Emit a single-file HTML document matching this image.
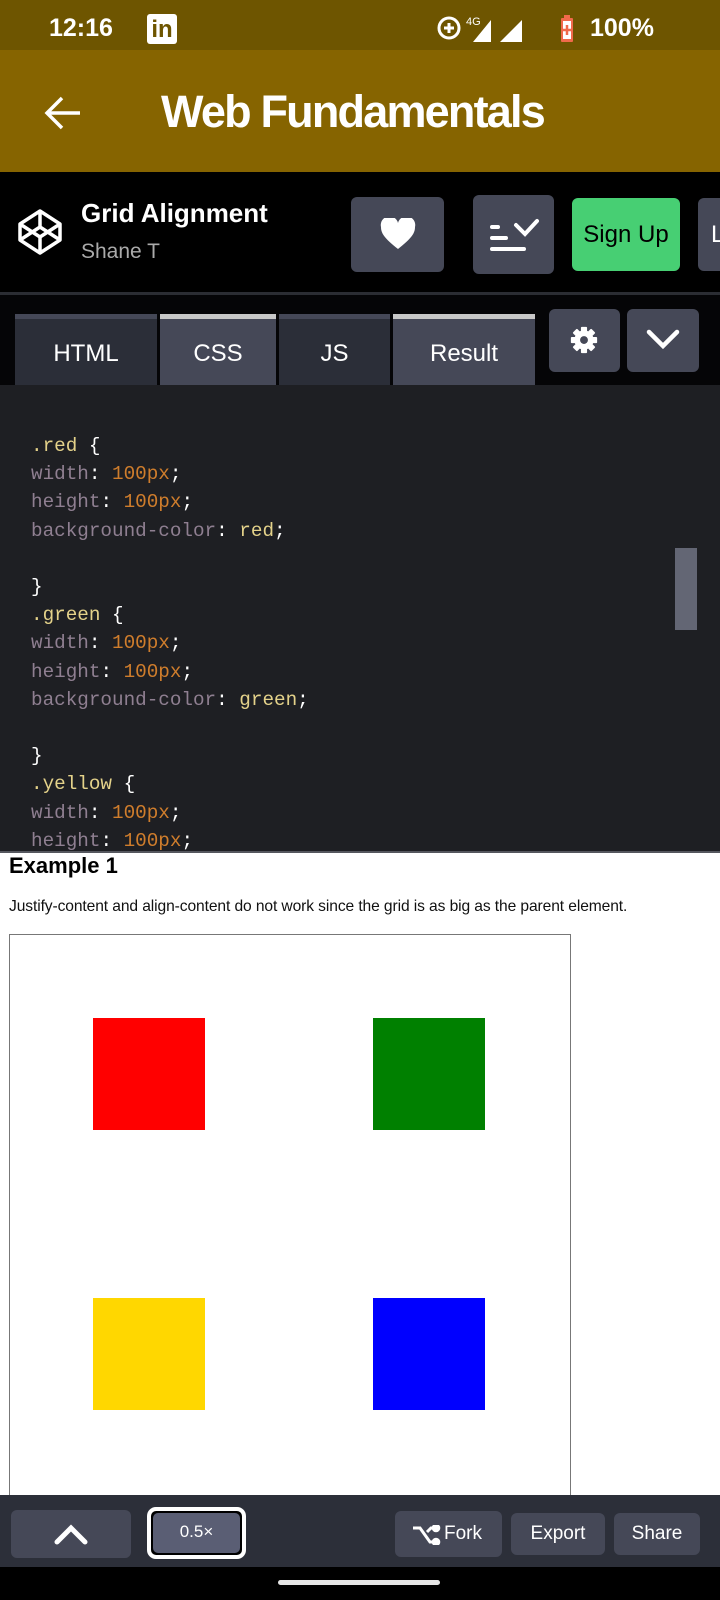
<!DOCTYPE html>
<html><head><meta charset="utf-8"><style>
*{margin:0;padding:0;box-sizing:border-box}
body{width:720px;height:1600px;overflow:hidden;background:#000;font-family:"Liberation Sans",sans-serif;position:relative}
.a{position:absolute}
.btn{position:absolute;background:#454857;border-radius:6px}
.code{font-family:"Liberation Mono",monospace;font-size:19.3px;line-height:28.2px;color:#fff;white-space:pre}
.p{color:#8f7f91}.n{color:#cf7d2c}.s{color:#e4d28a}
.tab{position:absolute;top:314px;height:71px;color:#fff;font-size:24px;text-align:center;line-height:70px}
</style></head><body>
<div class="a" style="left:0;top:0;width:720px;height:50px;background:#6e5500"></div>
<div class="a" style="left:49px;top:14px;color:#fff;font-size:25px;font-weight:bold">12:16</div>
<div class="a" style="left:147px;top:14px;width:30px;height:30px;background:#fff;border-radius:3px;color:#6e5500;font-weight:bold;font-size:24px;line-height:32px;text-align:center">in</div>
<svg class="a" style="left:435px;top:12px" width="200" height="32" viewBox="0 0 200 32">
<circle cx="14" cy="16" r="10" fill="none" stroke="#fff" stroke-width="3"/><path d="M9 16h10M14 11v10" stroke="#fff" stroke-width="3"/>
<text x="31" y="13" fill="#fff" font-size="11" font-family="Liberation Sans">4G</text>
<path d="M38 30L56 8V30Z" fill="#fff"/>
<path d="M65 30L87 8V30Z" fill="#fff"/>
<rect x="126" y="6" width="12" height="24" fill="#f06a4b" rx="1"/><rect x="129" y="3" width="6" height="4" fill="#f06a4b"/><rect x="128" y="9" width="8" height="18" fill="#fff"/><path d="M132 13v10M127 18h10" stroke="#f06a4b" stroke-width="2.5"/>
</svg>
<div class="a" style="left:590px;top:14px;color:#fff;font-size:25px;font-weight:bold">100%</div>
<div class="a" style="left:0;top:50px;width:720px;height:122px;background:#866400"></div>
<svg class="a" style="left:42px;top:92px" width="42" height="42" viewBox="0 0 42 42"><path d="M38 21H6M20 6L5 21l15 15" fill="none" stroke="#fff" stroke-width="3.5"/></svg>
<div class="a" style="left:161px;top:86px;color:#fff;font-size:45px;font-weight:bold;letter-spacing:-1.8px">Web Fundamentals</div>
<svg class="a" style="left:16px;top:208px" width="48" height="48" viewBox="0 0 48 48" fill="none" stroke="#fff" stroke-width="3.5" stroke-linejoin="round"><path d="M24 3L44 16V32L24 45L4 32V16Z M4 16L24 29L44 16 M4 32L24 19L44 32 M24 3V19 M24 29V45"/></svg>
<div class="a" style="left:81px;top:198px;color:#fff;font-size:26px;font-weight:bold">Grid Alignment</div>
<div class="a" style="left:81px;top:240px;color:#aaa;font-size:21px">Shane T</div>
<div class="btn" style="left:351px;top:197px;width:93px;height:75px"></div>
<svg class="a" style="left:380px;top:218px" width="36" height="32" viewBox="0 0 36 32"><path d="M18 31C4 20 1 15 1 9A8 8 0 0 1 18 5A8 8 0 0 1 35 9C35 15 32 20 18 31Z" fill="#fff"/></svg>
<div class="btn" style="left:473px;top:195px;width:81px;height:79px"></div>
<svg class="a" style="left:488px;top:215px" width="56" height="40" viewBox="0 0 56 40" stroke="#fff" stroke-width="4" fill="none" stroke-linecap="round"><path d="M4 12h6M4 23h14M4 34h32M28 10l9 9 12-13"/></svg>
<div class="a" style="left:572px;top:198px;width:108px;height:73px;background:#47cf73;border-radius:6px;color:#000;font-size:24px;text-align:center;line-height:73px">Sign Up</div>
<div class="btn" style="left:698px;top:198px;width:40px;height:73px;color:#fff;font-size:24px;line-height:73px;padding-left:13px">L</div>
<div class="a" style="left:0;top:292px;width:720px;height:3px;background:#2b2d33"></div>
<div class="a" style="left:0;top:295px;width:720px;height:90px;background:#050507"></div>
<div class="tab" style="left:15px;width:142px;background:#2b2e38;border-top:5px solid #454857">HTML</div>
<div class="tab" style="left:160px;width:116px;background:#454857;border-top:5px solid #c8c8c8">CSS</div>
<div class="tab" style="left:279px;width:111px;background:#2b2e38;border-top:5px solid #454857">JS</div>
<div class="tab" style="left:393px;width:142px;background:#454857;border-top:5px solid #c8c8c8">Result</div>
<div class="btn" style="left:549px;top:309px;width:71px;height:63px"></div>
<svg class="a" style="left:570px;top:326px" width="28" height="28" viewBox="0 0 32 32"><g fill="#fff"><circle cx="16" cy="16" r="11"/><g id="t"><rect x="12.5" y="1" width="7" height="30" rx="1"/></g><use href="#t" transform="rotate(45 16 16)"/><use href="#t" transform="rotate(90 16 16)"/><use href="#t" transform="rotate(135 16 16)"/></g><circle cx="16" cy="16" r="4.5" fill="#454857"/></svg>
<div class="btn" style="left:627px;top:309px;width:72px;height:63px"></div>
<svg class="a" style="left:645px;top:328px" width="36" height="22" viewBox="0 0 36 22"><path d="M4 4l14 14L32 4" fill="none" stroke="#fff" stroke-width="4.5" stroke-linecap="round"/></svg>
<div class="a" style="left:0;top:385px;width:720px;height:466px;background:#1e1f23;overflow:hidden">
<div class="code a" style="left:31px;top:47px"><span class="s">.red</span> {
<span class="p">width</span>: <span class="n">100px</span>;
<span class="p">height</span>: <span class="n">100px</span>;
<span class="p">background-color</span>: <span class="s">red</span>;

}
<span class="s">.green</span> {
<span class="p">width</span>: <span class="n">100px</span>;
<span class="p">height</span>: <span class="n">100px</span>;
<span class="p">background-color</span>: <span class="s">green</span>;

}
<span class="s">.yellow</span> {
<span class="p">width</span>: <span class="n">100px</span>;
<span class="p">height</span>: <span class="n">100px</span>;</div>
<div class="a" style="left:675px;top:163px;width:22px;height:82px;background:#636674"></div>
</div>
<div class="a" style="left:0;top:851px;width:720px;height:644px;background:#fff;border-top:2px solid #55575e"></div>
<div class="a" style="left:9px;top:853px;font-size:22px;font-weight:bold;color:#000">Example 1</div>
<div class="a" style="left:9px;top:898px;font-size:15.6px;color:#111;letter-spacing:-0.1px;white-space:nowrap">Justify-content and align-content do not work since the grid is as big as the parent element.</div>
<div class="a" style="left:9px;top:934px;width:562px;height:580px;border:1.5px solid #777"></div>
<div class="a" style="left:93px;top:1018px;width:112px;height:112px;background:#f00"></div>
<div class="a" style="left:373px;top:1018px;width:112px;height:112px;background:#008000"></div>
<div class="a" style="left:93px;top:1298px;width:112px;height:112px;background:#ffd700"></div>
<div class="a" style="left:373px;top:1298px;width:112px;height:112px;background:#00f"></div>
<div class="a" style="left:0;top:1495px;width:720px;height:72px;background:#2c2f39"></div>
<div class="btn" style="left:11px;top:1510px;width:120px;height:48px"></div>
<svg class="a" style="left:52px;top:1521px" width="38" height="26" viewBox="0 0 38 26"><path d="M5 21L19 7l14 14" fill="none" stroke="#fff" stroke-width="5" stroke-linecap="round"/></svg>
<div class="a" style="left:147px;top:1507px;width:99px;height:52px;border:4px solid #fff;border-radius:9px;background:#000;padding:2px"><div style="width:100%;height:100%;background:#5a5e74;border-radius:5px;color:#fff;font-size:17px;text-align:center;line-height:38px">0.5×</div></div>
<div class="btn" style="left:395px;top:1511px;width:107px;height:46px;color:#fff;font-size:19px;line-height:46px;padding-left:49px">Fork</div>
<svg class="a" style="left:412px;top:1525px" width="30" height="20" viewBox="0 0 30 20" fill="none" stroke="#fff" stroke-width="3"><path d="M1 3h7l10 14h4M15 7l4-4h3"/><circle cx="24" cy="3" r="2.8" fill="#fff"/><circle cx="24" cy="17" r="2.8" fill="#fff"/></svg>
<div class="btn" style="left:511px;top:1513px;width:94px;height:42px;color:#fff;font-size:19px;text-align:center;line-height:42px">Export</div>
<div class="btn" style="left:614px;top:1513px;width:86px;height:42px;color:#fff;font-size:19px;text-align:center;line-height:42px">Share</div>
<div class="a" style="left:278px;top:1580px;width:162px;height:5px;background:#e6e6e6;border-radius:3px"></div>
</body></html>
